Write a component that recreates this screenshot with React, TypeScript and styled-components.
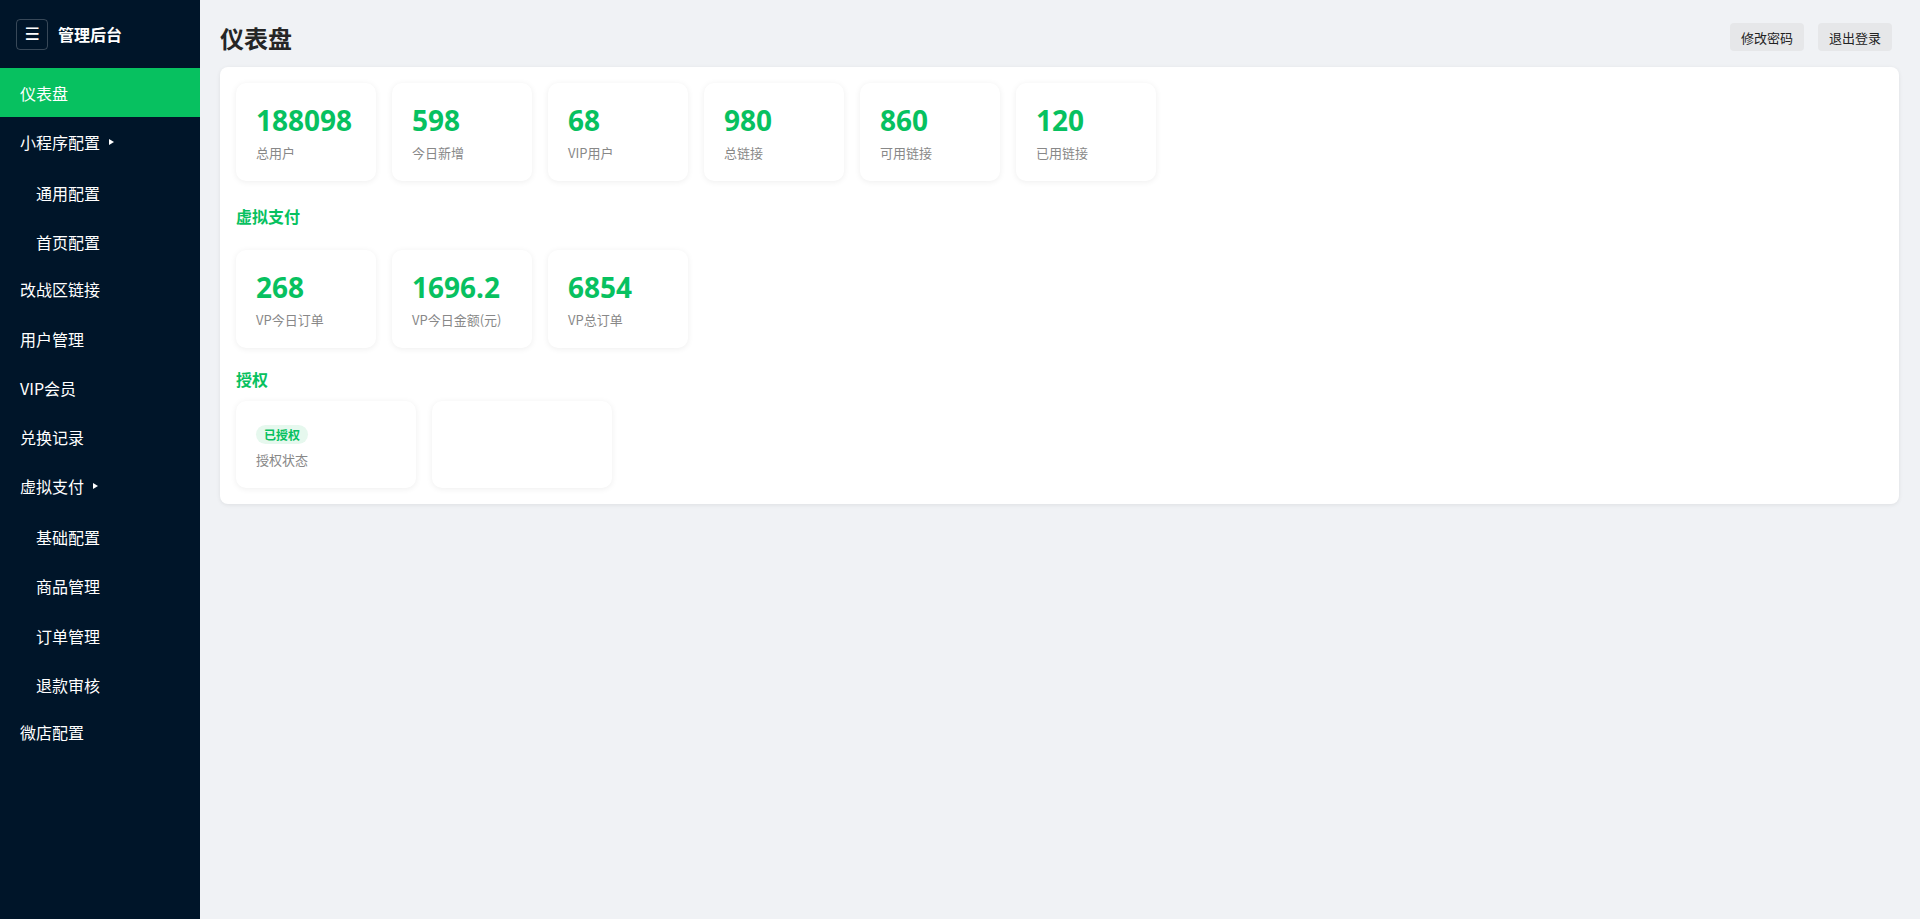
import React from "react";
import styled, { createGlobalStyle } from "styled-components";

const GlobalStyle = createGlobalStyle`
  html, body, #root { margin: 0; padding: 0; height: 100%; }
  body {
    font-family: "Noto Sans", "Noto Sans CJK SC", sans-serif;
    background: #f0f2f5;
  }
  * { box-sizing: border-box; }
`;

const GREEN = "#07c160";

const Layout = styled.div`
  display: flex;
  width: 1920px;
  min-height: 919px;
`;

const Sidebar = styled.aside`
  width: 200px;
  flex-shrink: 0;
  background: #001529;
  color: #fff;
  min-height: 919px;
`;

const Brand = styled.div`
  height: 68px;
  display: flex;
  align-items: center;
  padding: 0 16px;
  gap: 10px;
`;

const MenuToggle = styled.button`
  width: 32px;
  height: 31px;
  border: 1px solid rgba(255, 255, 255, 0.22);
  border-radius: 4px;
  background: transparent;
  color: #fff;
  font-size: 17px;
  line-height: 1;
  display: flex;
  align-items: center;
  justify-content: center;
  padding: 0;
  font-family: "DejaVu Sans", sans-serif;
`;

const BrandTitle = styled.div`
  font-size: 16px;
  font-weight: 700;
  font-family: "Noto Sans CJK SC", sans-serif;
`;

const NavItem = styled.div<{ $active?: boolean; $sub?: boolean }>`
  display: flex;
  align-items: center;
  padding: 12.6px 20px 12.6px ${(p) => (p.$sub ? "36px" : "20px")};
  line-height: 24px;
  font-size: 16px;
  font-family: "Noto Sans CJK SC", sans-serif;
  color: #fff;
  background: ${(p) => (p.$active ? GREEN : "transparent")};
`;

const SubMenu = styled.div`
  padding-top: 2px;
  margin-bottom: -2px;
`;

const Caret = styled.span`
  display: inline-block;
  margin-left: 9px;
  width: 0;
  height: 0;
  border-left: 5px solid #fff;
  border-top: 3px solid transparent;
  border-bottom: 3px solid transparent;
`;

const Main = styled.main`
  flex: 1;
  padding: 20px 21px 20px 20px;
  background: #f0f2f5;
`;

const Header = styled.div`
  height: 34px;
  display: flex;
  align-items: center;
  justify-content: space-between;
  margin-bottom: 13px;
  padding-right: 7px;
`;

const PageTitle = styled.h1`
  margin: 0;
  font-size: 24px;
  font-weight: 700;
  color: #262626;
  font-family: "Noto Sans CJK SC", sans-serif;
`;

const Actions = styled.div`
  display: flex;
  gap: 14px;
`;

const HeaderButton = styled.button`
  height: 28px;
  padding: 0 11px;
  border: none;
  border-radius: 4px;
  background: #e6e7e9;
  color: #222;
  font-size: 13px;
  font-family: "Noto Sans CJK SC", sans-serif;
`;

const Panel = styled.section`
  background: #fff;
  border-radius: 8px;
  padding: 16px;
  box-shadow: 0 1px 4px rgba(0, 0, 0, 0.08);
`;

const CardRow = styled.div`
  display: flex;
  gap: 16px;
  flex-wrap: wrap;
`;

const StatCard = styled.div`
  width: 140px;
  padding: 20px 20px 18px;
  background: #fff;
  border-radius: 10px;
  box-shadow: 0 1px 6px rgba(0, 0, 0, 0.07);
`;

const StatValue = styled.div`
  font-size: 28px;
  line-height: 34px;
  font-weight: 700;
  color: ${GREEN};
  margin-bottom: 6px;
  font-family: "Noto Sans", "Noto Sans CJK SC", sans-serif;
`;

const StatLabel = styled.div`
  font-size: 13px;
  line-height: 20px;
  color: #888;
  font-family: "Noto Sans CJK SC", sans-serif;
  white-space: nowrap;
`;

const SectionTitle = styled.h2<{ $top: number; $bottom: number }>`
  margin: ${(p) => p.$top}px 0 ${(p) => p.$bottom}px;
  font-size: 16px;
  line-height: 24px;
  font-weight: 700;
  color: ${GREEN};
  font-family: "Noto Sans CJK SC", sans-serif;
`;

const AuthCard = styled.div`
  width: 180px;
  height: 87px;
  padding: 22px 20px 18px;
  background: #fff;
  border-radius: 10px;
  box-shadow: 0 1px 6px rgba(0, 0, 0, 0.07);
`;

const Badge = styled.span`
  display: inline-block;
  height: 19px;
  line-height: 19px;
  padding: 0 8px;
  border-radius: 10px;
  background: #e6f8ee;
  color: ${GREEN};
  font-size: 12px;
  font-weight: 700;
  font-family: "Noto Sans CJK SC", sans-serif;
`;

const AuthLabel = styled.div`
  margin-top: 6px;
  font-size: 13px;
  line-height: 18px;
  color: #888;
  font-family: "Noto Sans CJK SC", sans-serif;
`;

type NavEntry = { label: string; active?: boolean; children?: string[] };

const nav: NavEntry[] = [
  { label: "仪表盘", active: true },
  { label: "小程序配置", children: ["通用配置", "首页配置"] },
  { label: "改战区链接" },
  { label: "用户管理" },
  { label: "VIP会员" },
  { label: "兑换记录" },
  { label: "虚拟支付", children: ["基础配置", "商品管理", "订单管理", "退款审核"] },
  { label: "微店配置" },
];

const topStats = [
  { value: "188098", label: "总用户" },
  { value: "598", label: "今日新增" },
  { value: "68", label: "VIP用户" },
  { value: "980", label: "总链接" },
  { value: "860", label: "可用链接" },
  { value: "120", label: "已用链接" },
];

const payStats = [
  { value: "268", label: "VP今日订单" },
  { value: "1696.2", label: "VP今日金额(元)" },
  { value: "6854", label: "VP总订单" },
];

export default function App() {
  return (
    <>
      <GlobalStyle />
      <Layout>
        <Sidebar>
          <Brand>
            <MenuToggle>☰</MenuToggle>
            <BrandTitle>管理后台</BrandTitle>
          </Brand>
          {nav.map((n) => (
            <React.Fragment key={n.label}>
              <NavItem $active={n.active}>
                {n.label}
                {n.children && <Caret />}
              </NavItem>
              {n.children && (
                <SubMenu>
                  {n.children.map((c) => (
                    <NavItem key={c} $sub>
                      {c}
                    </NavItem>
                  ))}
                </SubMenu>
              )}
            </React.Fragment>
          ))}
        </Sidebar>
        <Main>
          <Header>
            <PageTitle>仪表盘</PageTitle>
            <Actions>
              <HeaderButton>修改密码</HeaderButton>
              <HeaderButton>退出登录</HeaderButton>
            </Actions>
          </Header>
          <Panel>
            <CardRow>
              {topStats.map((s) => (
                <StatCard key={s.label}>
                  <StatValue>{s.value}</StatValue>
                  <StatLabel>{s.label}</StatLabel>
                </StatCard>
              ))}
            </CardRow>
            <SectionTitle $top={23} $bottom={22}>虚拟支付</SectionTitle>
            <CardRow>
              {payStats.map((s) => (
                <StatCard key={s.label}>
                  <StatValue>{s.value}</StatValue>
                  <StatLabel>{s.label}</StatLabel>
                </StatCard>
              ))}
            </CardRow>
            <SectionTitle $top={19} $bottom={10}>授权</SectionTitle>
            <CardRow>
              <AuthCard>
                <Badge>已授权</Badge>
                <AuthLabel>授权状态</AuthLabel>
              </AuthCard>
              <AuthCard />
            </CardRow>
          </Panel>
        </Main>
      </Layout>
    </>
  );
}
